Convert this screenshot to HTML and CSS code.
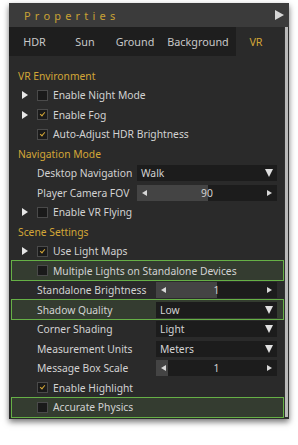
FILE: index.html
```html
<html>
<head>
<meta charset="UTF-8">
<title>Properties</title>
<link rel="stylesheet" href="styles.css">
</head>
<body>
<div class="panel">
  <div class="titlebar">
    <span class="title">Properties</span>
    <span class="play"></span>
  </div>
  <div class="main">
    <div class="content">
      <div class="tabs">
        <div class="tab t-hdr">HDR</div>
        <div class="tab t-sun">Sun</div>
        <div class="tab t-ground">Ground</div>
        <div class="tab t-bg">Background</div>
        <div class="tab active">VR</div>
      </div>
      <div class="list">
        <div class="head">VR Environment</div>
        <div class="row"><span class="exp"></span><span class="chk"></span>Enable Night Mode</div>
        <div class="row"><span class="exp"></span><span class="chk on"></span>Enable Fog</div>
        <div class="row"><span class="noexp"></span><span class="chk on"></span>Auto-Adjust HDR Brightness</div>

        <div class="head">Navigation Mode</div>
        <div class="row field nav"><span class="lbl">Desktop Navigation</span><span class="drop">Walk<i></i></span></div>
        <div class="row field nav"><span class="lbl">Player Camera FOV</span><span class="slider"><b style="width:51%"></b><em class="l"></em><span class="val">90</span><em class="r"></em></span></div>
        <div class="row"><span class="exp"></span><span class="chk"></span>Enable VR Flying</div>

        <div class="head">Scene Settings</div>
        <div class="row"><span class="exp"></span><span class="chk on"></span>Use Light Maps</div>
        <div class="row hl"><span class="noexp"></span><span class="chk"></span>Multiple Lights on Standalone Devices</div>
        <div class="row field"><span class="lbl">Standalone Brightness</span><span class="slider"><b style="width:50%"></b><em class="l"></em><span class="val">1</span><em class="r"></em></span></div>
        <div class="row field hl"><span class="lbl">Shadow Quality</span><span class="drop">Low<i></i></span></div>
        <div class="row field"><span class="lbl">Corner Shading</span><span class="drop">Light<i></i></span></div>
        <div class="row field"><span class="lbl">Measurement Units</span><span class="drop">Meters<i></i></span></div>
        <div class="row field"><span class="lbl">Message Box Scale</span><span class="slider"><b style="width:10%"></b><em class="l"></em><span class="val">1</span><em class="r"></em></span></div>
        <div class="row"><span class="noexp"></span><span class="chk on"></span>Enable Highlight</div>
        <div class="row hl"><span class="noexp"></span><span class="chk"></span>Accurate Physics</div>
      </div>
    </div>
    <div class="scroll"><div class="thumb"></div></div>
  </div>
</div>
</body>
</html>
```

FILE: styles.css
```css
body {
  margin: 0;
  background: #ffffff;
  font-family: "Noto Sans", "Open Sans", sans-serif;
  font-size: 10.3px;
}
.panel {
  margin: 3px 0 0 9px;
  width: 280px;
  background: #2a2a2a;
  box-shadow: 0 3px 6px rgba(0, 0, 0, 0.55);
  white-space: nowrap;
}
.titlebar {
  height: 24px;
  background: #3b3b3b;
  display: flex;
  align-items: center;
  justify-content: space-between;
}
.title {
  margin-left: 15px;
  color: #c9a235;
  letter-spacing: 4.2px;
  font-size: 11px;
}
.play {
  width: 0;
  height: 0;
  border-left: 9px solid #d6d6d6;
  border-top: 5.5px solid transparent;
  border-bottom: 5.5px solid transparent;
  margin-right: 5px;
}
.main {
  display: flex;
}
.content {
  flex: 1;
}
.scroll {
  width: 5px;
  background: #2f2f2f;
  display: flex;
  justify-content: center;
}
.thumb {
  width: 3px;
  background: #b9b9b9;
  margin-bottom: 2px;
}
.tabs {
  display: flex;
  height: 29px;
  background: #1e1e1e;
  color: #c8c8c8;
  font-size: 10.8px;
}
.tab {
  display: flex;
  align-items: center;
  justify-content: center;
}
.t-hdr { width: 51px; }
.t-sun { width: 50px; }
.t-ground { width: 50px; }
.t-bg { width: 76px; }
.tab.active {
  flex: 1;
  padding-right: 8px;
  background: #2a2a2a;
  color: #d3a637;
}
.list {
  padding: 10px 0 2px 0;
}
.head {
  height: 19.5px;
  display: flex;
  align-items: center;
  padding-left: 9px;
  color: #d3a637;
}
.row {
  height: 19.5px;
  display: flex;
  align-items: center;
  color: #d2d2d2;
  box-sizing: border-box;
}
.exp, .noexp {
  width: 15px;
  margin-left: 13px;
  height: 9px;
}
.exp {
  width: 0;
  margin-right: 9px;
  border-left: 6px solid #e6e6e6;
  border-top: 4.5px solid transparent;
  border-bottom: 4.5px solid transparent;
  height: 0;
}
.chk {
  width: 11px;
  height: 11px;
  box-sizing: border-box;
  border: 1px solid #4a4a4a;
  background: #1a1a1a;
  margin-right: 5px;
  position: relative;
}
.chk.on::after {
  content: "";
  position: absolute;
  left: 3px;
  top: 1px;
  width: 2px;
  height: 4px;
  border-right: 1px solid #d3a637;
  border-bottom: 1px solid #d3a637;
  transform: rotate(40deg);
}
.hl {
  margin: 0 0 0 2px;
  background: #343c30;
  border: 1px solid #66b046;
  height: 21px;
  margin-top: -1px;
  margin-bottom: -0.5px;
}
.hl .noexp {
  margin-left: 10px;
}
.field {
  padding-left: 28px;
  padding-right: 7px;
}
.field.hl {
  padding-left: 25px;
  padding-right: 6px;
}
.lbl {
  width: 119px;
}
.nav .lbl {
  width: 100px;
}
.drop, .slider {
  flex: 1;
  height: 16px;
  background: #1c1c1c;
  display: flex;
  align-items: center;
  position: relative;
}
.drop {
  padding-left: 4px;
  justify-content: space-between;
}
.drop i {
  width: 0;
  height: 0;
  border-top: 8px solid #e0e0e0;
  border-left: 4.5px solid transparent;
  border-right: 4.5px solid transparent;
  margin-right: 4px;
}
.slider b {
  position: absolute;
  left: 0;
  top: 0;
  bottom: 0;
  background: #444444;
}
.slider em {
  position: relative;
  width: 0;
  height: 0;
  border-top: 3.5px solid transparent;
  border-bottom: 3.5px solid transparent;
}
.slider .l {
  border-right: 5px solid #d8d8d8;
  margin-left: 5px;
}
.slider .r {
  border-left: 5px solid #d8d8d8;
  margin-right: 5px;
}
.val {
  position: relative;
  flex: 1;
  text-align: center;
  color: #d2d2d2;
}
```
